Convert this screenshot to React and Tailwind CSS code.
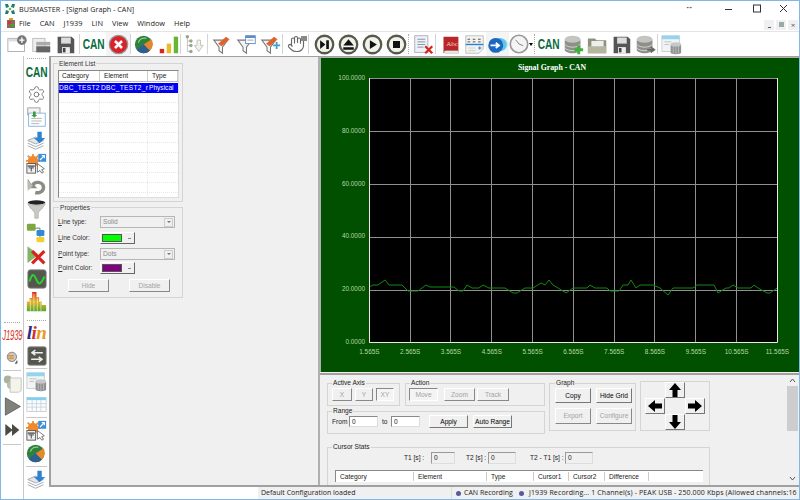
import React from "react";
import { Settings, Hand } from "lucide-react";

const S = ({ children, w = 21, h = 21, vb = "0 0 24 24" }) => (
  <svg width={w} height={h} viewBox={vb} className="block shrink-0">{children}</svg>
);

const Can = () => (
  <span className="block font-['Liberation_Sans'] font-bold text-[14.5px] leading-[16px] text-[#0b6b3e] scale-x-[0.7]">CAN</span>
);
const NewCfg = () => (
  <S><rect x="1" y="5" width="19" height="15" fill="#fff" stroke="#aaa" /><rect x="1.5" y="5.5" width="18" height="3" fill="#ddd" /><circle cx="17" cy="7" r="5.5" fill="#777" /><path d="M17 4v6M14 7h6" stroke="#fff" strokeWidth="1.6" /></S>
);
const OpenCfg = () => (
  <S><rect x="2" y="5" width="14" height="15" fill="#eee" stroke="#bbb" /><rect x="6" y="9" width="16" height="4" fill="#aaa" /><rect x="6" y="14" width="16" height="7" fill="#666" /></S>
);
const Save = ({ c = "#555" }) => (
  <S><path d="M3 3h16l3 3v16H3z" fill={c} /><rect x="7" y="4" width="11" height="7" fill="#ddd" /><rect x="8" y="15" width="9" height="7" fill="#eee" /><rect x="9" y="16" width="3" height="5" fill="#444" /></S>
);
const RedX = () => (
  <S><circle cx="12" cy="12" r="10.5" fill="#d8232a" stroke="#999" strokeWidth="1.4" /><path d="M8 8l8 8M16 8l-8 8" stroke="#fff" strokeWidth="3" /></S>
);
const Pie = () => (
  <S><circle cx="11" cy="12" r="10" fill="#2f7f3e" /><path d="M11 12L20 6A10 10 0 0 1 18 19z" fill="#e8862e" /><path d="M11 12L18 19A10 10 0 0 1 3 18z" fill="#2d5f94" /><path d="M5 10a7 7 0 0 1 9-5" stroke="#8fd07a" strokeWidth="1.4" fill="none" /></S>
);
const Bars = () => (
  <S><rect x="2" y="17" width="5" height="5" fill="#d8261e" /><rect x="10" y="11" width="5" height="11" fill="#eab92c" /><rect x="18" y="3" width="5" height="19" fill="#65b634" /></S>
);
const TreeDown = () => (
  <S><path d="M5 3v17M5 8h4M5 13h4M5 20h4" stroke="#bbb" fill="none" /><g fill="#9aa58c"><circle cx="5" cy="3" r="2" /><circle cx="9" cy="8" r="2" /><circle cx="9" cy="13" r="2" /><circle cx="9" cy="20" r="2" /></g><path d="M16 7h4v6h3l-5 7-5-7h3z" fill="#f4f2e6" stroke="#bbb" /></S>
);
const Funnel = ({ k = 0 }) => (
  <S>
    <path d="M2 7h16l-6 8v7l-4-3v-4z" fill="#f4f4f4" stroke="#777" strokeWidth="1.2" />
    {k === 1 ? <><rect x="11" y="2" width="11" height="9" fill="#fff" stroke="#5b87c5" /><rect x="11" y="2" width="11" height="2.5" fill="#5b87c5" /><path d="M13 7h7" stroke="#999" /></> : <path d="M7 11l9-8 4 3-9 8z" fill="#e2612a" />}
    {k === 2 && <path d="M15 13h8M19 9v8" stroke="#3d9fd6" strokeWidth="2" />}
  </S>
);
const HandI = () => (
  <div className="relative"><Hand size={18} strokeWidth={1.5} color="#666" /><span className="absolute right-[-2px] top-[1px] w-[6px] h-[5px] bg-[#888]" /></div>
);
const Round = ({ children }) => (
  <S><circle cx="12" cy="12" r="10" fill="#f2f2ea" stroke="#565a4c" strokeWidth="2.6" />{children}</S>
);
const DocX = () => (
  <S><rect x="2" y="2" width="15" height="19" fill="#eef1f5" stroke="#aab" /><path d="M5 6h9M5 9h9M5 12h9M5 15h7" stroke="#7d8da5" /><path d="M14 14l8 8M22 14l-8 8" stroke="#d5261f" strokeWidth="2.6" /></S>
);
const Book = () => (
  <S><path d="M4 3h17v17H7l-3 2z" fill="#b9262a" /><path d="M4 20l3-1h14v3H6z" fill="#eee" stroke="#999" strokeWidth=".5" /><text x="7" y="14" fontSize="8" fill="#f4d3c0" fontFamily="Liberation Serif">Abc</text></S>
);
const Calc = () => (
  <S><path d="M2 2h20v15l-5 5H2z" fill="#f3f3ef" stroke="#bbb" /><path d="M4 6h3M10 6h3M16 6h3M4 9h3M10 9h3M16 9h3" stroke="#444" /><path d="M2 12h20" stroke="#2a7fd0" strokeWidth="1.6" /><path d="M18 14v4M16 16h4" stroke="#2a7fd0" /><path d="M5 16h8M5 19h8" stroke="#ccc" /></S>
);
const BlueArrow = () => (
  <S><circle cx="18" cy="12" r="6" fill="#bfeaf7" /><circle cx="15" cy="12" r="7.5" fill="#5fc6ea" /><circle cx="10" cy="13" r="8.5" fill="#1a68c0" /><path d="M4 13h9M10 10l4 3-4 3" stroke="#fff" strokeWidth="1.8" fill="none" /></S>
);
const Clock = () => (
  <div className="flex items-center"><S w={20} h={20}><circle cx="12" cy="12" r="10.5" fill="#f4f4f4" stroke="#999" strokeWidth="2" /><path d="M12 12l-4-5M12 12l5 2" stroke="#888" strokeWidth="1.2" /></S><span className="w-0 h-0 border-x-[2.5px] border-x-transparent border-t-[3px] border-t-black" /></div>
);
const Db = ({ plus }) => (
  <S>
    <path d="M2 7v11c0 2 4 4 9 4s9-2 9-4V7z" fill="#8d8f88" />
    <ellipse cx="11" cy="6" rx="9" ry="4" fill="#c4c5c0" />
    <path d="M2 11c0 2 4 4 9 4s9-2 9-4M2 15c0 2 4 4 9 4s9-2 9-4" stroke="#ddd" fill="none" />
    {plus === 1 && <path d="M18 13v10M13 18h10" stroke="#3fb13b" strokeWidth="3.4" />}
    {plus === 2 && <path d="M14 18h7M18 15l4 3-4 3" stroke="#666" strokeWidth="2" fill="none" />}
  </S>
);
const Folder = () => (
  <S><path d="M1 5h8l2 2h11v15H1z" fill="#8f9178" /><rect x="5" y="8" width="14" height="8" fill="#eee" /><path d="M1 14h21v8H1z" fill="#b5b69f" /></S>
);
const TableDb = () => (
  <S><rect x="1" y="2" width="20" height="18" fill="#f2f4f4" stroke="#c8ccd0" /><rect x="1" y="2" width="20" height="4" fill="#8fd6ee" /><path d="M4 9h8M4 12h5" stroke="#bbb" /><path d="M11 12v9c0 1 2.500 2 6 2s6-1 6-2v-9z" fill="#8f9395" /><ellipse cx="17" cy="12" rx="6" ry="2.500" fill="#c6c8ca" /><path d="M14 14v8M17 15v8M20 14v8" stroke="#bbb" /></S>
);
const Table = () => (
  <S><rect x="1" y="4" width="22" height="16" fill="#fbfcfc" stroke="#c8ccd0" /><rect x="1" y="4" width="22" height="3" fill="#7fd2ee" /><path d="M1 11h22M1 15h22M7 7v13M12 7v13M17 7v13" stroke="#c5d5e5" /></S>
);
const DocDown = () => (
  <S><rect x="2" y="1" width="14" height="8" fill="#f3f3f3" stroke="#999" /><rect x="3" y="7" width="19" height="15" fill="#fff" stroke="#7eaede" /><path d="M6 13h12M6 16h12M6 19h9" stroke="#aaa" /><path d="M8 5h3v4h2l-3.500 3L6 9h2z" fill="#3a9b3a" /></S>
);
const StackDown = () => (
  <S><path d="M2 12l9-4 9 4-9 4z" fill="#e4e6ea" stroke="#9aa0aa" /><path d="M2 15l9 4 9-4M2 18l9 4 9-4" stroke="#9aa0aa" fill="none" /><path d="M13 2h5v7h4l-6.500 6L9 9h4z" fill="#2f82cf" /></S>
);
const CfgArrow = () => (
  <S><circle cx="8" cy="9" r="6" fill="#ef8a2e" /><path d="M8 1v16M0 9h16M2 3l12 12M14 3L2 15" stroke="#ef8a2e" strokeWidth="2" /><rect x="1" y="12" width="10" height="11" fill="#eee" stroke="#555" /><path d="M2 15h8" stroke="#555" strokeWidth="1.600" /><path d="M6 17v4M3 17h6" stroke="#333" /><rect x="14" y="1" width="9" height="9" fill="#3a8fdc" /><path d="M16 8l5-5M18 3h3v3" stroke="#fff" strokeWidth="1.300" fill="none" /><path d="M13 12l0 10 3-2 2 3 2-1-2-3 3-1z" fill="#fff" stroke="#444" strokeWidth=".8" /></S>
);
const Undo = () => (
  <S><path d="M6 9c4-6 16-4 16 4 0 6-6 9-12 8l1-4c3 1 7-1 7-4 0-4-6-5-8-2l3 3H2V3z" fill="#8b8d84" /><path d="M2 5v12l6-6z" fill="#b9bab2" /></S>
);
const FunnelP = () => (
  <S><ellipse cx="12" cy="4" rx="10" ry="2.500" fill="#222" /><path d="M2 5c2 6 7 8 8 11v6h4v-6c1-3 6-5 8-11-4 3-16 3-20 0z" fill="#c9c9c6" stroke="#999" strokeWidth=".6" /></S>
);
const TreeC = () => (
  <S><path d="M8 7h8v5M16 14v4" stroke="#666" fill="none" /><rect x="1" y="2" width="10" height="8" rx="1.500" fill="#7da83e" /><rect x="12" y="9" width="9" height="7" rx="1.500" fill="#2e8ad6" /><rect x="12" y="17" width="9" height="6" rx="1.500" fill="#efd02f" /></S>
);
const GreenX = () => (
  <S><path d="M2 2l12 9-12 9z" fill="#7cbb5b" stroke="#999" strokeWidth=".6" /><path d="M7 7l14 14M21 7L7 21" stroke="#d9231f" strokeWidth="3.600" /></S>
);
const Scope = () => (
  <S w={20} h={20}><rect x="1" y="1" width="22" height="22" rx="3" fill="#55574f" stroke="#888" /><path d="M3 15c3-10 5-10 8-3s5 8 10-3" stroke="#29d32f" strokeWidth="2.400" fill="none" /></S>
);
const Spectrum = () => (
  <S><defs><linearGradient id="sg" x1="0" y1="0" x2="0" y2="1"><stop offset="0" stopColor="#d9261e" /><stop offset=".5" stopColor="#e9b62a" /><stop offset="1" stopColor="#5aa92c" /></linearGradient></defs><path d="M1 23V12h3V8h3V1h5v6h3v5h3v4h5v7z" fill="url(#sg)" /><path d="M5 9v14M9 3v20M13 8v15M17 13v10" stroke="#fff" strokeWidth=".6" /></S>
);
const Lin = () => (
  <span className="block font-['Liberation_Serif'] italic font-bold text-[19px] leading-[20px] tracking-[-0.5px]"><span className="text-[#2b2b8f]">l</span><span className="text-[#d13030]">i</span><span className="text-[#e89a20]">n</span></span>
);
const J1939 = () => (
  <span className="block font-['Liberation_Sans'] italic text-[14px] leading-[16px] text-[#d3352a] scale-x-[0.55] tracking-[-0.3px]">J1939</span>
);
const ArrowsDark = () => (
  <S w={20} h={20}><rect x="1" y="1" width="22" height="22" rx="2" fill="#55574f" stroke="#888" /><path d="M19 8H7M10 5L6 8l4 3M5 16h12M14 13l4 3-4 3" stroke="#eee" strokeWidth="1.800" fill="none" /></S>
);
const Plug = () => (
  <S w={15} h={15}><circle cx="11" cy="11" r="7.500" fill="#c9c9c9" stroke="#555" /><rect x="5" y="8" width="9" height="2.500" fill="#e0922e" /><rect x="5" y="12" width="9" height="2.500" fill="#e0922e" /><path d="M19 17v4h-3" stroke="#222" strokeWidth="1.500" fill="none" /></S>
);
const Puzzle = () => (
  <S w={19} h={19}><circle cx="6" cy="7" r="5" fill="#a9b29b" /><circle cx="10" cy="14" r="5" fill="#b9bfae" /><path d="M9 5h14v16l-3 2H9z" fill="#f4f4ea" stroke="#bbb" /></S>
);
const Play = ({ c = "#80827a" }) => (
  <S w={19} h={19}><path d="M3 1l19 11L3 23z" fill={c} stroke="#555" /></S>
);
const FF = () => (
  <S w={16} h={16}><path d="M2 3l11 9-11 9z" fill="#4a4c44" /><path d="M12 3l11 9-11 9z" fill="#4a4c44" /></S>
);

const TopBtn = ({ children }) => <div className="w-[24px] h-[24px] flex items-center justify-center shrink-0">{children}</div>;
const TSep = ({ cls }) => <div className={cls}><div className="w-px h-[20px] bg-[#d4d4d4]" /></div>;
const Dots = () => <div className="mx-[3px] mt-[2px] h-px border-t border-dotted border-[#aaa]" />;
const LeftI = ({ children }) => <div className="h-[23px] flex items-center justify-center">{children}</div>;
const LSep = () => <div className="mx-[2px] my-px h-px bg-[#c8c8c8]" />;

const btn = "flex items-center justify-center whitespace-nowrap bg-[#f0f0f0] border border-t-white border-l-white border-r-[#777] border-b-[#777] text-black";
const dis = "flex items-center justify-center whitespace-nowrap bg-[#f0f0f0] border border-t-white border-l-white border-r-[#888] border-b-[#888] text-[#a3a3a3]";
const press = "flex items-center justify-center whitespace-nowrap bg-[#f4f4f4] border border-t-[#888] border-l-[#888] border-r-white border-b-white text-[#a3a3a3]";
const input = "bg-white border border-t-[#888] border-l-[#888] border-r-[#ddd] border-b-[#ddd] pl-[2px] leading-[10px] flex items-center";
const inputD = "bg-[#f0f0f0] border border-t-[#999] border-l-[#999] border-r-[#ddd] border-b-[#ddd] pl-[2px] flex items-center";

const Combo = ({ label }) => (
  <div className="w-[75px] h-[12px] bg-[#f0f0f0] border border-[#b5b5b5] flex items-center pl-[2px] text-[#8a8a8a] justify-between">
    <span>{label}</span>
    <span className="w-[9px] h-[9px] mr-px bg-[#f0f0f0] border border-[#ccc] flex items-center justify-center"><span className="w-0 h-0 border-x-[2px] border-x-transparent border-t-[2px] border-t-[#777]" /></span>
  </div>
);
const ColorBtn = ({ cls }) => (
  <div className="w-[35px] h-[12px] bg-[#f0f0f0] border border-t-white border-l-white border-r-[#666] border-b-[#666] flex items-center pl-px">
    <span className={cls} />
    <span className="ml-[4px] w-[6px] h-[7px] flex items-center justify-center"><span className="w-[3px] h-px bg-[#888]" /></span>
  </div>
);
const Arrow = ({ rot }) => (
  <svg width="14" height="14" viewBox="0 0 14 14" className={rot}><path d="M7 0l6 7H9.500v7h-5V7H1z" fill="#000" /></svg>
);

const curve = "369,287 373,285 378,285 385,280 389,285 402,285 408,291 418,291 426,285 430,287 454,287 459,291 463,291 467,285 472,288 479,288 483,285 489,288 505,288 513,293 517,293 525,288 533,288 541,283 545,285 549,280 553,285 558,288 566,293 573,288 587,288 590,285 595,288 607,288 610,291 619,291 623,285 628,285 631,280 636,288 640,285 653,285 660,288 668,295 673,288 693,288 697,285 714,285 718,293 726,288 729,288 733,285 738,288 751,288 754,285 758,288 767,293 770,293 777,288";
const xs = [369, 410, 450, 491, 532, 573, 614, 654, 695, 736, 777];
const ys = [78, 131, 184, 237, 290, 342];
const yLabels = ["100.0000", "80.0000", "60.0000", "40.0000", "20.0000", "0.0000"];
const xLabels = ["1.565S", "2.565S", "3.565S", "4.565S", "5.565S", "6.565S", "7.565S", "8.565S", "9.565S", "10.565S", "11.565S"];

export default function App() {
  return (
    <div className="w-[800px] h-[500px] flex flex-col bg-white overflow-hidden border-t border-x border-b border-[#7db8e8] font-['Liberation_Sans',sans-serif] text-[6.6px] text-black">
      {/* title */}
      <div className="h-[15px] flex items-center shrink-0 pt-px">
        <svg width="10" height="10" viewBox="0 0 10 10" className="ml-[4px] mr-[4px]"><path d="M0 0h3l1 3-3 1zM10 0H7L6 3l3 1zM0 10h3l1-3-3-1zM10 10H7L6 7l3-1z" fill="#1d7f6e" /><circle cx="5" cy="5" r="1.300" fill="#79b544" /></svg>
        <span className="font-['Open_Sans'] text-[7.2px] text-[#222]">BUSMASTER - [Signal Graph - CAN]</span>
        <div className="flex-1" />
        <span className="mr-[31px] mt-[-5px] text-[8px] leading-[8px] font-bold">↔</span>
        <svg width="70" height="10" viewBox="0 0 70 10" className="mr-[5px]"><path d="M1 5.500h7" stroke="#333" /><rect x="29.500" y="1" width="7" height="7" fill="none" stroke="#333" /><path d="M56 1l7 7M63 1l-7 7" stroke="#333" /></svg>
      </div>
      {/* menu */}
      <div className="h-[15px] flex items-center shrink-0 relative font-['Open_Sans'] text-[7.4px] text-[#222]">
        <svg width="10" height="11" viewBox="0 0 10 11" className="ml-[5px] mr-[3px]"><rect x="1" y="2" width="8" height="8" fill="#8a6a5a" /><rect x="2" y="3" width="3" height="3" fill="#d33" /><rect x="5" y="6" width="3" height="3" fill="#3a3" /><rect x="3" y="0" width="4" height="2" fill="#d9a020" /></svg>
        <span>File</span>
        <span className="ml-[9px]">CAN</span>
        <span className="ml-[9px]">J1939</span>
        <span className="ml-[9px]">LIN</span>
        <span className="ml-[9px]">View</span>
        <span className="ml-[9px]">Window</span>
        <span className="ml-[9px]">Help</span>
        <div className="flex-1" />
        <div className="flex gap-[2px] mr-px mt-[2px]">
          <span className="w-[10px] h-[10px] bg-[#f0f0f0] flex items-end justify-center pb-[2px]"><span className="w-[3px] h-px bg-[#557]" /></span>
          <span className="w-[10px] h-[10px] bg-[#f0f0f0] flex items-center justify-center"><span className="w-[5px] h-[5px] bg-[#9aa]" /></span>
          <span className="w-[10px] h-[10px] bg-[#f0f0f0] flex items-center justify-center text-[8px] leading-[8px] text-[#557]">×</span>
        </div>
      </div>
      {/* toolbar */}
      <div className="h-[25px] flex items-center shrink-0 border-t border-[#e4e4e4] pl-[4px]">
        <TopBtn><NewCfg /></TopBtn><TopBtn><OpenCfg /></TopBtn><TopBtn><Save /></TopBtn>
        <TSep cls="w-[5px] flex justify-center" />
        <TopBtn><Can /></TopBtn><div className="w-[24px] h-[24px] flex items-center justify-center bg-[#f4f4f4]"><RedX /></div>
        <TSep cls="w-[2px]" />
        <TopBtn><Pie /></TopBtn><TopBtn><Bars /></TopBtn>
        <TSep cls="w-[1px]" />
        <TopBtn><TreeDown /></TopBtn>
        <TSep cls="w-[5px] flex justify-center" />
        <TopBtn><Funnel /></TopBtn><TopBtn><Funnel k={1} /></TopBtn><TopBtn><Funnel k={2} /></TopBtn>
        <TSep cls="w-[2px]" />
        <TopBtn><HandI /></TopBtn>
        <TSep cls="w-[4px]" />
        <TopBtn><Round><path d="M7 7l6 5-6 5zM14 7h3v10h-3z" fill="#111" /></Round></TopBtn>
        <TopBtn><Round><path d="M12 6l6 7H6zM6 15h12v3H6z" fill="#111" /></Round></TopBtn>
        <TopBtn><Round><path d="M9 7l8 5-8 5z" fill="#111" /></Round></TopBtn>
        <TopBtn><Round><rect x="8" y="8" width="8" height="8" fill="#111" /></Round></TopBtn>
        <div className="w-[3px] h-[20px] border-l border-dotted border-[#aaa]" />
        <TopBtn><DocX /></TopBtn>
        <TSep cls="w-[3px]" />
        <TopBtn><Book /></TopBtn><TopBtn><Calc /></TopBtn><div className="w-[23px] h-[24px] flex items-center justify-center bg-[#f4f4f4]"><BlueArrow /></div><div className="w-[23px] flex justify-center"><Clock /></div>
        <div className="w-[3px] h-[20px] border-l border-dotted border-[#aaa] ml-[2px]" />
        <TopBtn><Can /></TopBtn><TopBtn><Db plus={1} /></TopBtn><TopBtn><Folder /></TopBtn><TopBtn><Save /></TopBtn><TopBtn><Db plus={2} /></TopBtn>
        <TSep cls="w-[2px]" />
        <TopBtn><TableDb /></TopBtn>
      </div>
      {/* main */}
      <div className="flex-1 min-h-0 flex">
        <div className="w-[48px] shrink-0 flex">
          <div className="w-[23px] border-r border-[#c8c8c8]">
            <div className="mt-[266px]"><Dots /></div>
            <LeftI><J1939 /></LeftI>
            <LeftI><Plug /></LeftI>
            <LSep />
            <LeftI><Puzzle /></LeftI>
            <LeftI><Play /></LeftI>
            <LeftI><FF /></LeftI>
            <div className="mt-[3px]"><LSep /></div>
          </div>
          <div className="w-[25px]">
            <Dots />
            <div className="h-px" />
            <LeftI><Can /></LeftI>
            <LeftI><Settings size={19} strokeWidth={1.2} color="#777" /></LeftI>
            <LeftI><DocDown /></LeftI>
            <LeftI><StackDown /></LeftI>
            <LeftI><CfgArrow /></LeftI>
            <LeftI><Undo /></LeftI>
            <LeftI><FunnelP /></LeftI>
            <LeftI><TreeC /></LeftI>
            <LeftI><GreenX /></LeftI>
            <LeftI><Scope /></LeftI>
            <LeftI><Spectrum /></LeftI>
            <div className="h-[5px]" />
            <Dots />
            <LeftI><Lin /></LeftI>
            <LeftI><ArrowsDark /></LeftI>
            <LSep />
            <LeftI><TableDb /></LeftI>
            <LeftI><Table /></LeftI>
            <LSep />
            <LeftI><CfgArrow /></LeftI>
            <LeftI><Pie /></LeftI>
            <LSep />
            <LeftI><StackDown /></LeftI>
          </div>
        </div>
        <div className="flex-1 min-w-0 flex flex-col">
          <div className="flex-1 min-h-0 flex border-l-2 border-t border-b-2 border-[#a0a0a0] bg-[#f0f0f0] overflow-hidden">
            {/* left pane */}
            <div className="w-[269px] shrink-0 border-r-2 border-[#b0b0b0] pl-[2px] pt-[2px] text-[#333]">
              <fieldset className="w-[130px] h-[143px] border border-[#d4d4d4] pl-[4px]">
                <legend className="px-px leading-[9px]">Element List</legend>
                <div className="w-[121px] h-[128px] mt-[2px] bg-white border border-t-[#888] border-l-[#888] border-r-[#ddd] border-b-[#ddd] overflow-hidden">
                  <div className="flex h-[11px] border-b border-[#bbb] bg-white text-[#222] leading-[10px]">
                    <span className="w-[41px] pl-[3px] border-r border-[#ccc]">Category</span>
                    <span className="w-[48px] pl-[4px] border-r border-[#ccc]">Element</span>
                    <span className="flex-1 pl-[4px] border-r border-[#ccc]">Type</span>
                  </div>
                  <div className="flex h-[10px] mt-px bg-[#0000f0] text-white leading-[10px] overflow-hidden">
                    <span className="w-[41px] overflow-hidden whitespace-nowrap tracking-[0.3px]">DBC_TEST2</span>
                    <span className="w-[48px] pl-px overflow-hidden whitespace-nowrap tracking-[0.3px]">DBC_TEST2_m</span>
                    <span className="flex-1 pl-px overflow-hidden whitespace-nowrap">Physical</span>
                  </div>
                  {[0, 1, 2, 3, 4, 5, 6, 7, 8, 9, 10].map((i) => (
                    <div key={i} className="flex h-[10px] border-b border-dotted border-[#e6e6e6]">
                      <span className="w-[41px] border-r border-dotted border-[#e6e6e6]" />
                      <span className="w-[48px] border-r border-dotted border-[#e6e6e6]" />
                    </div>
                  ))}
                </div>
              </fieldset>
              <fieldset className="w-[130px] h-[95px] mt-[1px] border border-[#d4d4d4] pl-[4px]">
                <legend className="px-px leading-[9px] ml-px">Properties</legend>
                <div className="flex items-center mt-[4px]"><span className="w-[42px]"><u>L</u>ine type:</span><Combo label="Solid" /></div>
                <div className="flex items-center mt-[4px]"><span className="w-[42px]"><u>L</u>ine Color:</span><ColorBtn cls="w-[20px] h-[8px] bg-[#00ff00] border border-[#555]" /></div>
                <div className="flex items-center mt-[4px]"><span className="w-[42px]"><u>P</u>oint type:</span><Combo label="Dots" /></div>
                <div className="flex items-center mt-[2px]"><span className="w-[42px]"><u>P</u>oint Color:</span><ColorBtn cls="w-[20px] h-[8px] bg-[#800080] border border-[#555]" /></div>
                <div className="flex mt-[5px] ml-[10px] gap-[20px]">
                  <div className={dis + " w-[41px] h-[13px]"}>Hide</div>
                  <div className={dis + " w-[41px] h-[13px]"}>Disable</div>
                </div>
              </fieldset>
            </div>
            {/* right pane */}
            <div className="flex-1 min-w-0 flex flex-col">
              <div className="h-[315px] shrink-0 bg-[#005000] border-l border-t border-[#b0b0b0] flex flex-col font-['Liberation_Sans'] text-[#b8d8a8] text-[6.4px]">
                <div className="h-[20px] flex items-center justify-center pr-[16px] font-['Liberation_Serif'] font-bold text-[7.8px] text-white">Signal Graph - CAN</div>
                <div className="flex">
                  <div className="w-[48px] h-[274px] -mt-[5px] flex flex-col justify-between items-end pr-[4px] leading-[10px]">
                    {yLabels.map((t) => <span key={t} className="h-[10px]">{t}</span>)}
                  </div>
                  <svg width="409" height="265" viewBox="369 78 409 265" className="block">
                    <rect x="369" y="78" width="409" height="265" fill="#000" />
                    {xs.map((x) => <line key={x} x1={x + 0.5} x2={x + 0.5} y1="78" y2="342" stroke="#909090" />)}
                    {ys.map((y) => <line key={y} x1="369" x2="777" y1={y + 0.5} y2={y + 0.5} stroke="#909090" />)}
                    <polyline points={curve} fill="none" stroke="#128a12" strokeWidth="1" />
                    <path d="M369.500 78v264.500H777.500V78" fill="none" stroke="#e8e8e8" />
                  </svg>
                </div>
                <div className="flex ml-[28px] leading-[10px]">
                  {xLabels.map((t) => <span key={t} className="w-[40.8px] text-center">{t}</span>)}
                </div>
              </div>
              <div className="flex-1 min-h-0 flex border-t-2 border-[#a0a0a0] mt-px overflow-hidden text-[#222]">
                <div className="flex-1 min-w-0 pl-[7px] pt-[4px]">
                  <div className="flex gap-[4px]">
                    <div className="w-[218px]">
                      <div className="flex gap-[5px]">
                        <fieldset className="w-[73px] h-[27px] border border-[#d4d4d4] pl-[4px]">
                          <legend className="px-px leading-[8px]">Active Axis</legend>
                          <div className="flex gap-[3px] mt-px">
                            <div className={dis + " w-[20px] h-[13px]"}>X</div>
                            <div className={dis + " w-[18px] h-[13px]"}>Y</div>
                            <div className={press + " w-[18px] h-[13px]"}>XY</div>
                          </div>
                        </fieldset>
                        <fieldset className="w-[140px] h-[27px] border border-[#d4d4d4] pl-[3px]">
                          <legend className="ml-px px-px leading-[8px]">Action</legend>
                          <div className="flex mt-px">
                            <div className={press + " w-[29px] h-[13px]"}>Move</div>
                            <div className={dis + " w-[31px] h-[13px] ml-[6px]"}>Zoom</div>
                            <div className={dis + " w-[32px] h-[13px] ml-[2px]"}>Track</div>
                          </div>
                        </fieldset>
                      </div>
                      <fieldset className="w-[218px] h-[27px] mt-[1px] border border-[#d4d4d4] pl-[4px]">
                        <legend className="px-px leading-[8px]">Range</legend>
                        <div className="flex items-center">
                          <span className="w-[17px]">From</span>
                          <div className={input + " w-[29px] h-[11px]"}>0</div>
                          <span className="ml-[4px] w-[9px]">to</span>
                          <div className={input + " w-[29px] h-[11px]"}>0</div>
                          <div className={btn + " w-[39px] h-[13px] ml-[9px]"}>Apply</div>
                          <div className={btn + " w-[39px] h-[13px] ml-[5px]"}>Auto Range</div>
                        </div>
                      </fieldset>
                    </div>
                    <fieldset className="w-[87px] h-[52px] border border-[#d4d4d4] pl-[5px]">
                      <legend className="px-px leading-[8px]">Graph</legend>
                      <div className="grid grid-cols-[36px_36px] gap-x-[5px] gap-y-[5px] mt-px">
                        <div className={btn + " h-[15px]"}>Copy</div>
                        <div className={btn + " h-[15px]"}>Hide Grid</div>
                        <div className={dis + " h-[16px]"}>Export</div>
                        <div className={dis + " h-[16px]"}>Configure</div>
                      </div>
                    </fieldset>
                    <div className="w-[70px] h-[50px] mt-[2px] border border-[#d4d4d4] flex items-center justify-center">
                      <div className="grid grid-cols-[20px_20px_20px] grid-rows-[16px_16px_16px]">
                        <span />
                        <div className={btn}><Arrow rot="" /></div>
                        <span />
                        <div className={btn}><Arrow rot="-rotate-90" /></div>
                        <span />
                        <div className={btn}><Arrow rot="rotate-90" /></div>
                        <span />
                        <div className={btn}><Arrow rot="rotate-180" /></div>
                        <span />
                      </div>
                    </div>
                  </div>
                  <fieldset className="w-[383px] h-[70px] mt-[9px] border border-[#d4d4d4] pl-[7px]">
                    <legend className="-ml-[3px] px-px leading-[8px]">Cursor Stats</legend>
                    <div className="flex items-center mt-px">
                      <span className="ml-[69px] w-[27px] whitespace-nowrap">T1 [s] :</span>
                      <div className={inputD + " w-[24px] h-[12px]"}>0</div>
                      <span className="ml-[11px] w-[22px] whitespace-nowrap">T2 [s] :</span>
                      <div className={inputD + " w-[28px] h-[12px]"}>0</div>
                      <span className="ml-[14px] w-[35px] whitespace-nowrap">T2 - T1 [s] :</span>
                      <div className={inputD + " w-[28px] h-[12px]"}>0</div>
                    </div>
                    <div className="flex h-[12px] mt-[6px] w-[368px] bg-white border-t border-l border-[#888] border-b-0 items-center">
                      <span className="w-[78px] pl-[4px] border-r border-[#ccc]">Category</span>
                      <span className="w-[73px] pl-[4px] border-r border-[#ccc]">Element</span>
                      <span className="w-[47px] pl-[4px] border-r border-[#ccc]">Type</span>
                      <span className="w-[35px] pl-[4px] border-r border-[#ccc]">Cursor1</span>
                      <span className="w-[36px] pl-[4px] border-r border-[#ccc]">Cursor2</span>
                      <span className="w-[44px] pl-[4px] border-r border-[#ccc]">Difference</span>
                    </div>
                  </fieldset>
                </div>
                {/* scrollbar */}
                <div className="w-[13px] shrink-0 flex flex-col items-center pt-[3px] bg-[#f0f0f0]">
                  <svg width="7" height="5" viewBox="0 0 7 5"><path d="M1 4l2.500-3L6 4" fill="none" stroke="#555" /></svg>
                  <div className="w-[11px] h-[45px] mt-[3px] bg-[#cdcdcd]" />
                  <div className="flex-1" />
                  <svg width="7" height="5" viewBox="0 0 7 5" className="mb-[4px]"><path d="M1 1l2.500 3L6 1" fill="none" stroke="#555" /></svg>
                </div>
              </div>
            </div>
          </div>
          {/* status */}
          <div className="h-[12px] shrink-0 flex bg-white text-[7px] text-[#222] font-['Open_Sans']">
            <div className="w-[209px] shrink-0" />
            <div className="flex-1 flex items-center bg-[#f0f0f0] overflow-hidden whitespace-nowrap">
              <span className="w-[194px] pl-[3px] shrink-0 border-r border-[#ddd] leading-[12px]">Default Configuration loaded</span>
              <span className="ml-[4px] w-[5px] h-[5px] rounded-full bg-[#5a5a9a] shrink-0" />
              <span className="ml-[3px] w-[55px] shrink-0">CAN Recording</span>
              <span className="w-[5px] h-[5px] rounded-full bg-[#5a5a9a] shrink-0" />
              <span className="ml-[5px] tracking-[0.12px]">J1939 Recording... 1 Channel(s) - PEAK USB - 250.000 Kbps (Allowed channels:16</span>
            </div>
          </div>
        </div>
      </div>
    </div>
  );
}
